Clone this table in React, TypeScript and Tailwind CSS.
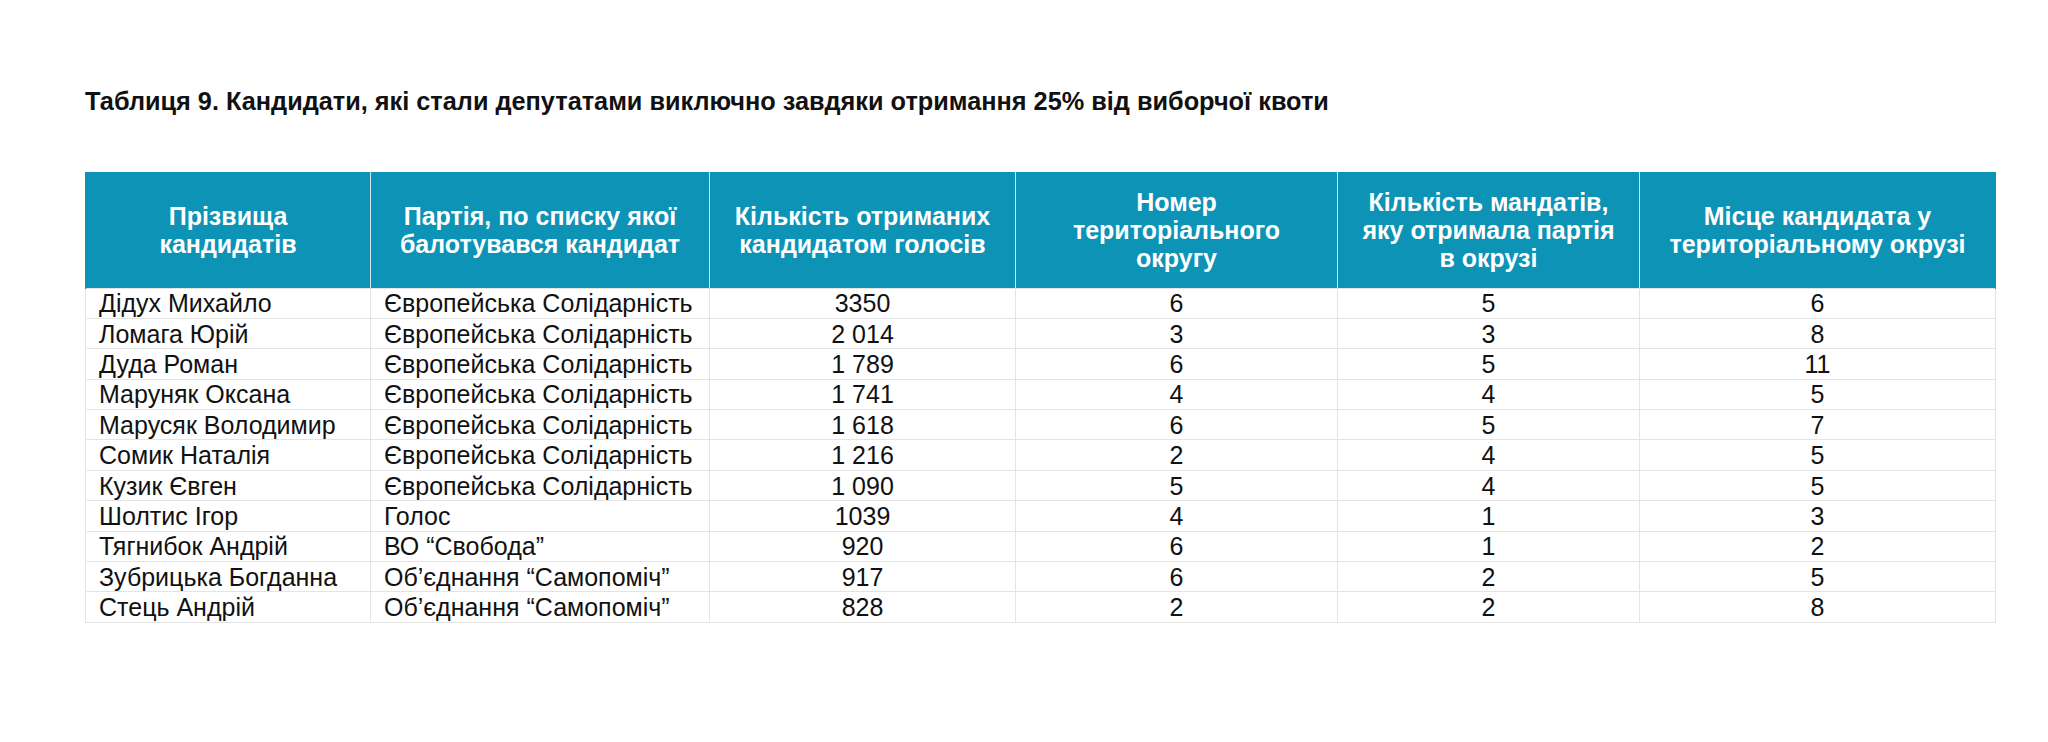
const rows = [
  ["Дідух Михайло", "Європейська Солідарність", "3350", "6", "5", "6"],
  ["Ломага Юрій", "Європейська Солідарність", "2 014", "3", "3", "8"],
  ["Дуда Роман", "Європейська Солідарність", "1 789", "6", "5", "11"],
  ["Маруняк Оксана", "Європейська Солідарність", "1 741", "4", "4", "5"],
  ["Марусяк Володимир", "Європейська Солідарність", "1 618", "6", "5", "7"],
  ["Сомик Наталія", "Європейська Солідарність", "1 216", "2", "4", "5"],
  ["Кузик Євген", "Європейська Солідарність", "1 090", "5", "4", "5"],
  ["Шолтис Ігор", "Голос", "1039", "4", "1", "3"],
  ["Тягнибок Андрій", "ВО “Свобода”", "920", "6", "1", "2"],
  ["Зубрицька Богданна", "Об’єднання “Самопоміч”", "917", "6", "2", "5"],
  ["Стець Андрій", "Об’єднання “Самопоміч”", "828", "2", "2", "8"],
];

const headers = [
  ["Прізвища", "кандидатів"],
  ["Партія, по списку якої", "балотувався кандидат"],
  ["Кількість отриманих", "кандидатом голосів"],
  ["Номер", "територіального", "округу"],
  ["Кількість мандатів,", "яку отримала партія", "в окрузі"],
  ["Місце кандидата у", "територіальному окрузі"],
];

const widths = ["w-[285px]", "w-[339px]", "w-[306px]", "w-[322px]", "w-[302px]", "w-[356px]"];

export default function App() {
  return (
    <div className="min-h-[742px] w-[2048px] bg-white pl-[85px] pt-[86px] font-['Liberation_Sans',Arial,sans-serif] text-[#111]">
      <h1 className="text-[25.3px] font-bold leading-[30px]">
        Таблиця 9. Кандидати, які стали депутатами виключно завдяки отримання 25% від виборчої квоти
      </h1>

      <table className="mt-[56px] w-[1910px] table-fixed border-collapse">
        <colgroup>
          {widths.map((w) => (
            <col key={w} className={w} />
          ))}
        </colgroup>
        <thead>
          <tr className="bg-[#0c93b6]">
            {headers.map((lines, i) => (
              <th
                key={i}
                className="h-[116px] border-x border-[#cdeaf2] px-1 text-center align-middle text-[25px] font-bold leading-[28px] text-white first:border-l-[#0c93b6] last:border-r-[#0c93b6]"
              >
                {lines.map((l) => (
                  <div key={l} className="whitespace-nowrap">
                    {l}
                  </div>
                ))}
              </th>
            ))}
          </tr>
        </thead>
        <tbody>
          {rows.map((r) => (
            <tr key={r[0]}>
              {r.map((c, i) => (
                <td
                  key={i}
                  className={
                    "h-[30.4px] whitespace-nowrap border border-[#e4e4e4] p-0 text-[25px] leading-[28px] " +
                    (i < 2 ? "pl-[13px] text-left" : "text-center")
                  }
                >
                  {c}
                </td>
              ))}
            </tr>
          ))}
        </tbody>
      </table>
    </div>
  );
}
